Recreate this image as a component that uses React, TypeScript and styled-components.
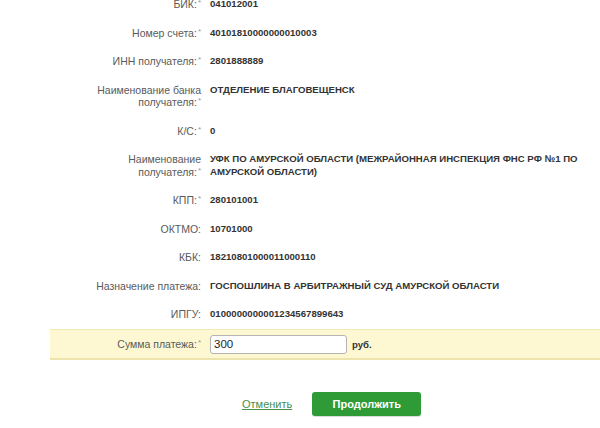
import React, { useState } from 'react';
import styled, { createGlobalStyle } from 'styled-components';

type Field = {
  label: string;
  value: string;
  required?: boolean;
};

const fields: Field[] = [
  { label: 'БИК:', value: '041012001', required: true },
  { label: 'Номер счета:', value: '40101810000000010003', required: true },
  { label: 'ИНН получателя:', value: '2801888889', required: true },
  { label: 'Наименование банка получателя:', value: 'ОТДЕЛЕНИЕ БЛАГОВЕЩЕНСК', required: true },
  { label: 'К/С:', value: '0', required: true },
  {
    label: 'Наименование получателя:',
    value: 'УФК ПО АМУРСКОЙ ОБЛАСТИ (МЕЖРАЙОННАЯ ИНСПЕКЦИЯ ФНС РФ №1 ПО АМУРСКОЙ ОБЛАСТИ)',
    required: true,
  },
  { label: 'КПП:', value: '280101001', required: true },
  { label: 'ОКТМО:', value: '10701000' },
  { label: 'КБК:', value: '18210801000011000110' },
  { label: 'Назначение платежа:', value: 'ГОСПОШЛИНА В АРБИТРАЖНЫЙ СУД АМУРСКОЙ ОБЛАСТИ' },
  { label: 'ИПГУ:', value: '0100000000001234567899643' },
];

const App = () => {
  const [amount, setAmount] = useState('300');

  return (
    <>
      <GlobalStyle />
      <Page>
        <Form>
          {fields.map((field) => (
            <Row key={field.label}>
              <Label>
                {field.label}
                {field.required && <Star>*</Star>}
              </Label>
              <Value>{field.value}</Value>
            </Row>
          ))}
        </Form>
        <AmountBand>
          <Row>
            <Label>
              Сумма платежа:<Star>*</Star>
            </Label>
            <InputWrap>
              <AmountInput value={amount} onChange={(e) => setAmount(e.target.value)} />
              <Unit>руб.</Unit>
            </InputWrap>
          </Row>
        </AmountBand>
        <Actions>
          <CancelLink href='#'>Отменить</CancelLink>
          <SubmitButton type='button'>Продолжить</SubmitButton>
        </Actions>
      </Page>
    </>
  );
};

export default App;

const GlobalStyle = createGlobalStyle`
  html, body {
    margin: 0;
    padding: 0;
    background: #fff;
  }
  body {
    font-family: Arial, 'Liberation Sans', sans-serif;
    overflow: hidden;
  }
`;

const Page = styled.div`
  width: 600px;
  height: 428px;
  overflow: hidden;
  display: flex;
  flex-direction: column;
`;

const Form = styled.div`
  display: flex;
  flex-direction: column;
  margin-top: -10px;
  padding-left: 90px;
`;

const Row = styled.div`
  display: grid;
  grid-template-columns: 111px 375px;
  column-gap: 9px;
  padding: 8px 0;
  align-items: start;
`;

const Label = styled.div`
  font-size: 10.5px;
  line-height: 12.5px;
  color: #5a5a5a;
  text-align: right;
`;

const Star = styled.span`
  color: #999;
  font-size: 8px;
  line-height: 0;
  vertical-align: 3px;
  margin-left: 1px;
`;

const Value = styled.div`
  font-size: 9.6px;
  line-height: 12.5px;
  font-weight: bold;
  color: #333;
`;

const AmountBand = styled.div`
  margin-left: 50px;
  padding-left: 40px;
  background: #fdf8d2;
  border-top: 1px solid #f1eab4;
  border-bottom: 2px solid #ece4ac;

  ${Row} {
    padding: 5px 0 4px;
    align-items: center;
  }
`;

const InputWrap = styled.div`
  display: flex;
  align-items: center;
  gap: 5px;
`;

const AmountInput = styled.input`
  box-sizing: border-box;
  width: 137px;
  height: 19px;
  padding: 0 3px;
  border: 1px solid #b4b4b4;
  border-radius: 3px;
  font-family: Arial, 'Liberation Sans', sans-serif;
  font-size: 11.5px;
  color: #222;
  background: #fff;
  outline: none;
`;

const Unit = styled.span`
  font-size: 9.6px;
  font-weight: bold;
  color: #333;
`;

const Actions = styled.div`
  display: flex;
  align-items: center;
  gap: 20px;
  margin-top: 32px;
  padding-left: 242px;
`;

const CancelLink = styled.a`
  font-size: 11px;
  color: #4a8f4a;
  text-decoration: underline;
`;

const SubmitButton = styled.button`
  width: 109px;
  height: 24px;
  border: none;
  border-radius: 3px;
  background: #2f9b37;
  color: #fff;
  font-family: Arial, 'Liberation Sans', sans-serif;
  font-size: 11px;
  font-weight: bold;
  cursor: pointer;
  box-shadow: 0 1px 1px rgba(0, 0, 0, 0.15);
`;
